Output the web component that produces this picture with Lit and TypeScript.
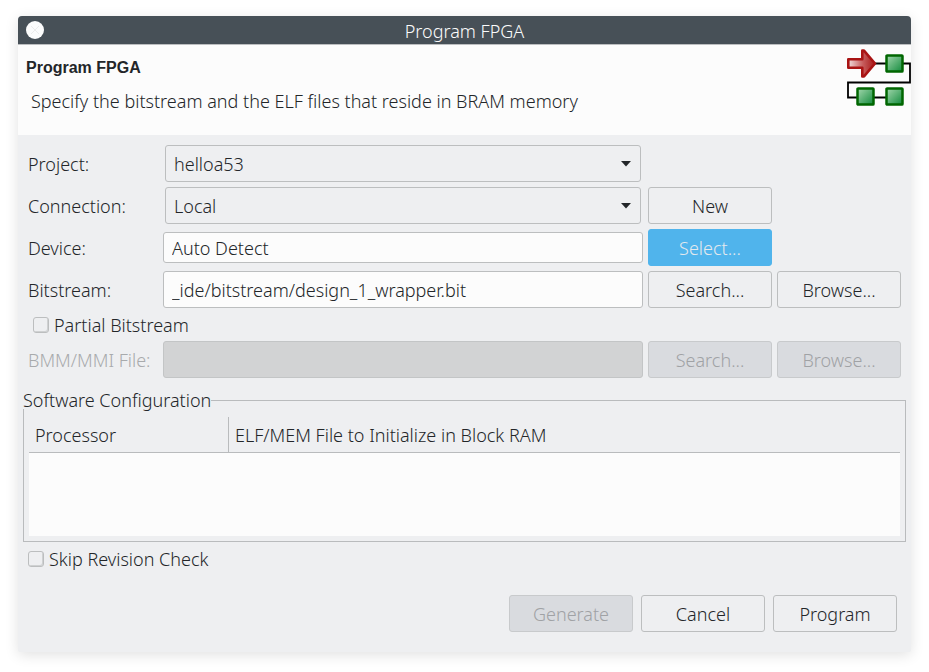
import { LitElement, css, html } from "lit";
import { customElement } from "lit/decorators.js";

@customElement("app-root")
export class AppRoot extends LitElement {
  static styles = css`
    :host {
      display: block;
      min-height: 100vh;
      box-sizing: border-box;
      padding: 16px 18px 20px;
      background: #fff;
      color: #232629;
      font: 350 18px/24px "Noto Sans", "Open Sans", sans-serif;
    }
    * {
      box-sizing: border-box;
    }
    .dialog {
      border-radius: 4px 4px 2px 2px;
      background: #eeeff1;
      box-shadow: 0 3px 14px rgba(0, 0, 0, 0.12);
    }
    .titlebar {
      display: grid;
      grid-template-columns: 18px 1fr 18px;
      align-items: center;
      height: 28px;
      padding: 0 8px;
      border-radius: 4px 4px 0 0;
      background: #475057;
      color: #fcfcfc;
    }
    .close {
      width: 18px;
      height: 18px;
      padding: 0;
      border: 0;
      border-radius: 50%;
      background: #fcfcfc;
    }
    .close svg {
      display: block;
    }
    .title {
      padding-top: 2px;
      font-weight: 300;
      text-align: center;
    }
    .banner {
      display: flex;
      justify-content: space-between;
      height: 91px;
      border-top: 1px solid #bcbec0;
      background: #fcfcfc;
    }
    .intro {
      padding: 11px 8px;
    }
    h1 {
      margin: 0;
      font: bold 16px/24px "Liberation Sans", Arial, sans-serif;
    }
    p {
      margin: 9px 5px 0;
      font-weight: 300;
    }
    .chain {
      flex: none;
      margin-top: 3px;
    }
    .form {
      display: grid;
      grid-template-columns: 130px minmax(0, 1fr) 124px 124px;
      gap: 5px;
      align-items: center;
      padding: 10px 10px 0;
    }
    .text,
    select,
    .btn {
      width: 100%;
      height: 37px;
      margin: 0;
      border: 1px solid #bcbebf;
      border-radius: 3px;
      background: #eeeff1;
      color: inherit;
      font: inherit;
    }
    .text {
      padding: 0 8px;
      background: #fcfcfc;
    }
    .text.short {
      height: 31px;
    }
    .text:disabled {
      border-color: #c3c5c6;
      background: #d2d3d4;
    }
    .picker {
      position: relative;
      padding: 0 2px;
    }
    select {
      display: block;
      padding: 0 24px 0 8px;
      appearance: none;
    }
    .caret {
      position: absolute;
      top: 16px;
      right: 12px;
      pointer-events: none;
    }
    .btn {
      padding: 0;
    }
    .btn.active {
      border-color: #50b4ec;
      background: #50b4ec;
      color: #e3e9ee;
    }
    .btn:disabled {
      border-color: #c8cacc;
      background: #d9dbdf;
      color: #a0a2a5;
    }
    .off {
      color: #a8aaac;
    }
    .check {
      display: flex;
      align-items: center;
      gap: 5px;
      height: 23px;
    }
    .form .check {
      grid-column: 1 / -1;
      padding-left: 5px;
    }
    .check input {
      width: 16px;
      height: 16px;
      margin: 0;
      border: 1px solid #bcbebf;
      border-radius: 3px;
      box-shadow: inset -1px -1px 0 #cfd1d2;
      appearance: none;
    }
    .check input:checked {
      background: #50b4ec;
    }
    fieldset {
      min-width: 0;
      margin: 14px 5px 0;
      padding: 8px 5px 5px;
      border: 1px solid #b9bbbd;
    }
    legend {
      margin-left: -6px;
      padding: 0;
      font-weight: 300;
      line-height: 17px;
    }
    table {
      width: 100%;
      border-spacing: 0;
      table-layout: fixed;
    }
    th {
      height: 36px;
      padding: 0 6px;
      border-bottom: 1px solid #b9bbbd;
      font-weight: inherit;
      text-align: left;
    }
    th:first-child {
      width: 200px;
      border-right: 1px solid #b9bbbd;
    }
    td {
      height: 83px;
      padding: 0;
      background: #fcfcfc;
    }
    .skip {
      padding: 5px 10px 0;
    }
    .actions {
      display: flex;
      justify-content: flex-end;
      gap: 8px;
      padding: 25px 14px 20px;
    }
    .actions .btn {
      width: 124px;
    }
  `;

  private caret() {
    return html`<svg class="caret" width="10" height="6" viewBox="0 0 10 6" aria-hidden="true">
      <path d="M0 0H10L5 5.500Z" fill="#232629" />
    </svg>`;
  }

  private chain() {
    const node = (x: number, y: number) => html`<svg x=${x} y=${y} width="19" height="19" viewBox="0 0 19 19">
      <rect x="1.500" y="1.500" width="16" height="16" rx=".6" fill="url(#g)" stroke="#006600" stroke-width="2.500" />
      <defs>
        <linearGradient id="g" x1="0" y1="0" x2="1" y2="1">
          <stop offset="0" stop-color="#a4d8ae" />
          <stop offset="1" stop-color="#128a3c" />
        </linearGradient>
      </defs>
    </svg>`;
    return html`<svg class="chain" width="64" height="60" viewBox="0 0 64 60" aria-hidden="true">
      <defs>
        <linearGradient id="r" x1="0" y1="0" x2="1" y2="0">
          <stop offset="0" stop-color="#f0dcdc" />
          <stop offset=".55" stop-color="#c65c5c" />
          <stop offset="1" stop-color="#a81818" />
        </linearGradient>
      </defs>
      <path d="M28 15.500H63V34.500H1V49.500H40" fill="none" stroke="#000" stroke-width="1.800" />
      <path
        d="M1.300 11.300H15.300V2.600H17L28 15.500 17 28.400H15.300V19.700H1.300Z"
        fill="url(#r)" stroke="#a91414" stroke-width="2.600" stroke-linejoin="round"
      />
      ${node(38, 6)} ${node(9, 39)} ${node(38, 39)}
    </svg>`;
  }

  render() {
    return html`
      <main class="dialog">
        <header class="titlebar">
          <button class="close" aria-label="Close">
            <svg width="18" height="18" viewBox="0 0 18 18">
              <path d="M5 5L13 13M13 5L5 13" stroke="#ececec" />
            </svg>
          </button>
          <div class="title">Program FPGA</div>
        </header>
        <section class="banner">
          <div class="intro">
            <h1>Program FPGA</h1>
            <p>Specify the bitstream and the ELF files that reside in BRAM memory</p>
          </div>
          ${this.chain()}
        </section>
        <div class="form">
          <label for="project">Project:</label>
          <div class="picker">
            <select id="project"><option>helloa53</option></select>
            ${this.caret()}
          </div>
          <span></span><span></span>

          <label for="connection">Connection:</label>
          <div class="picker">
            <select id="connection"><option>Local</option></select>
            ${this.caret()}
          </div>
          <button class="btn">New</button><span></span>

          <label for="device">Device:</label>
          <input class="text short" id="device" value="Auto Detect" />
          <button class="btn active">Select...</button><span></span>

          <label for="bitstream">Bitstream:</label>
          <input class="text" id="bitstream" value="_ide/bitstream/design_1_wrapper.bit" />
          <button class="btn">Search...</button>
          <button class="btn">Browse...</button>

          <label class="check"><input type="checkbox" />Partial Bitstream</label>

          <label class="off" for="bmm">BMM/MMI File:</label>
          <input class="text" id="bmm" disabled />
          <button class="btn" disabled>Search...</button>
          <button class="btn" disabled>Browse...</button>
        </div>
        <fieldset>
          <legend>Software Configuration</legend>
          <table>
            <thead>
              <tr>
                <th scope="col">Processor</th>
                <th scope="col">ELF/MEM File to Initialize in Block RAM</th>
              </tr>
            </thead>
            <tbody>
              <tr><td colspan="2"></td></tr>
            </tbody>
          </table>
        </fieldset>
        <div class="skip">
          <label class="check"><input type="checkbox" />Skip Revision Check</label>
        </div>
        <footer class="actions">
          <button class="btn" disabled>Generate</button>
          <button class="btn">Cancel</button>
          <button class="btn">Program</button>
        </footer>
      </main>
    `;
  }
}
